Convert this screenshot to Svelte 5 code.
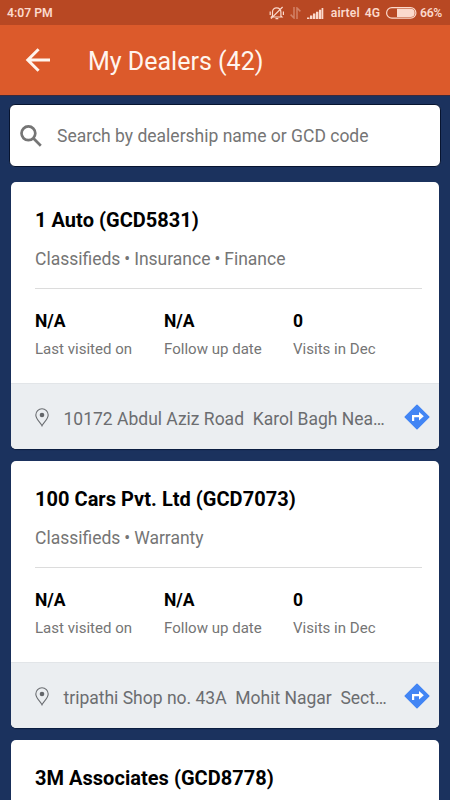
<script lang="ts">
	interface Dealer {
		name: string;
		code: string;
		details?: {
			services: string[];
			lastVisited: string;
			followUp: string;
			visits: number;
			address: string;
		};
	}

	const total = 42;
	let search = $state('');

	const dealers: Dealer[] = [
		{
			name: '1 Auto',
			code: 'GCD5831',
			details: {
				services: ['Classifieds', 'Insurance', 'Finance'],
				lastVisited: 'N/A',
				followUp: 'N/A',
				visits: 0,
				address: '10172 Abdul Aziz Road  Karol Bagh Nea…'
			}
		},
		{
			name: '100 Cars Pvt. Ltd',
			code: 'GCD7073',
			details: {
				services: ['Classifieds', 'Warranty'],
				lastVisited: 'N/A',
				followUp: 'N/A',
				visits: 0,
				address: 'tripathi Shop no. 43A  Mohit Nagar  Sect…'
			}
		},
		{
			name: '3M Associates',
			code: 'GCD8778'
		}
	];
</script>

<div class="screen">
	<div class="status">
		<span class="time">4:07 PM</span>
		<svg class="bell" width="16" height="14" viewBox="0 0 16 14">
			<path d="M3.5 10V6a4.2 4.2 0 0 1 8.4 0v4l1 1H2.5zM6.5 12.6h2.8M1.2 5.5v3.5M14.4 5.5v3.5M2 12.6L13.6 1" />
		</svg>
		<svg class="data" width="11" height="12" viewBox="0 0 11 12">
			<path d="M4 0v11L.6 7.6M7 12V1l3.4 3.4" />
		</svg>
		<svg class="signal" width="17" height="11" viewBox="0 0 17 11">
			<path d="M0 9.4h2.4V11H0zM3 7.5h2.4V11H3zM6 5.6h2.4V11H6zM9 3.7h2.4V11H9zM12 1.8h2.2V11H12zM14.6 0h1.7v11h-1.7z" />
		</svg>
		<span class="carrier">airtel</span>
		<span class="network">4G</span>
		<svg class="battery" width="31" height="12" viewBox="0 0 31 12">
			<rect x=".6" y=".6" width="29.3" height="10.6" rx="5.3" />
			<path d="M11 1.8h13.6a4.1 4.1 0 0 1 0 8.2H11z" />
		</svg>
		<span class="percent">66%</span>
	</div>

	<header>
		<button class="back" aria-label="Back">
			<svg width="25" height="24" viewBox="0 0 25 24">
				<path d="M13.6 1.2L2.8 12l10.8 10.8M2.8 12H25" />
			</svg>
		</button>
		<h1>My Dealers ({total})</h1>
	</header>

	<main>
		<label class="search">
			<svg width="22" height="22" viewBox="0 0 22 22">
				<circle cx="8.4" cy="8.3" r="6.9" />
				<path d="M13.6 13.5l7.2 7.2" />
			</svg>
			<input bind:value={search} placeholder="Search by dealership name or GCD code" />
		</label>

		{#each dealers as { name, code, details }}
			<article class="card">
				<div class="body">
					<h2>{name} ({code})</h2>
					{#if details}
						<p class="services">{details.services.join(' • ')}</p>
						<div class="stats">
							<div>
								<strong>{details.lastVisited}</strong>
								<span>Last visited on</span>
							</div>
							<div>
								<strong>{details.followUp}</strong>
								<span>Follow up date</span>
							</div>
							<div>
								<strong>{details.visits}</strong>
								<span>Visits in Dec</span>
							</div>
						</div>
					{/if}
				</div>
				{#if details}
					<div class="location">
						<svg class="pin" width="14" height="19" viewBox="0 0 14 19">
							<path d="M7 17.8C5.6 14.6.8 11.2.8 6.9a6.2 6.2 0 0 1 12.4 0c0 4.3-4.8 7.7-6.2 10.9z" />
							<circle cx="7" cy="7" r="2.3" />
						</svg>
						<span class="address">{details.address}</span>
						<svg class="directions" width="26" height="26" viewBox="0 0 26 26">
							<path class="sign" d="M13 1.2L24.8 13 13 24.8 1.2 13z" />
							<path class="stem" d="M9.1 17v-4.8h6.4" />
							<path class="head" d="M15 8l4.8 4.2-4.8 4.2z" />
						</svg>
					</div>
				{/if}
			</article>
		{/each}
	</main>
</div>

<style>
	:global(body) {
		margin: 0;
		background-color: #1b325e;
	}
	.screen {
		width: 450px;
		height: 800px;
		overflow: hidden;
		background-color: #1b325e;
		font-family: Roboto, sans-serif;
		color: #757575;
	}
	svg {
		display: block;
		flex: none;
	}
	.status {
		box-sizing: border-box;
		height: 25px;
		padding: 1px 8px 0 7px;
		display: flex;
		align-items: center;
		background-color: #b84823;
		color: #fbd9cc;
		font-size: 12.2px;
		font-weight: 600;
		white-space: nowrap;
	}
	.status path,
	.status rect {
		fill: none;
		stroke: #fbd9cc;
		stroke-width: 1.2;
	}
	.time {
		flex: 1;
	}
	.data {
		margin-left: 5px;
		opacity: 0.4;
	}
	.status .data path {
		stroke-width: 1.5;
	}
	.signal {
		margin-left: 6px;
	}
	.status .signal path,
	.status .battery path {
		fill: #fbd9cc;
		stroke: none;
	}
	.carrier {
		margin-left: 7px;
		letter-spacing: 0.1px;
	}
	.network {
		margin-left: 5px;
	}
	.battery {
		margin-left: 6px;
	}
	.percent {
		margin-left: 3px;
		letter-spacing: -0.3px;
	}
	header {
		box-sizing: border-box;
		height: 71px;
		padding-left: 25px;
		display: flex;
		align-items: center;
		border-bottom: 1px solid #3a2a3c;
		background-color: #dc5a2b;
		color: #fff5ee;
	}
	.back {
		border: 0;
		padding: 0;
		background: none;
	}
	.back path {
		fill: none;
		stroke: #fff5ee;
		stroke-width: 3;
	}
	h1 {
		margin: 4px 0 0 38px;
		font-size: 25px;
		font-weight: 400;
		line-height: 30px;
	}
	main {
		padding: 8px 9px 0;
	}
	.search {
		box-sizing: border-box;
		height: 63px;
		margin-bottom: 15px;
		padding-left: 10px;
		display: flex;
		align-items: center;
		gap: 15px;
		border: 1px solid #07142f;
		border-radius: 6px;
		background-color: #fff;
	}
	.search svg {
		fill: none;
		stroke: #757575;
		stroke-width: 2.7;
	}
	.search input {
		flex: 1;
		padding: 0;
		border: 0;
		outline: 0;
		background: none;
		font: inherit;
		font-size: 17.5px;
	}
	.search input::placeholder {
		color: #757575;
		opacity: 1;
	}
	.card {
		height: 267px;
		margin: 0 2px 12px;
		display: flex;
		flex-direction: column;
		border-radius: 5px;
		background-color: #fff;
		overflow: hidden;
		box-shadow: 0 1px 1px #0b1c3f;
	}
	.body {
		flex: 1;
		padding: 26px 17px 0 24px;
	}
	h2 {
		margin: 0;
		font-size: 20px;
		font-weight: 700;
		line-height: 24px;
		letter-spacing: 0.03px;
		color: #000;
	}
	.services {
		margin: 16px 0 0;
		padding-bottom: 17px;
		border-bottom: 1px solid #dcdcdc;
		font-size: 17.5px;
		line-height: 23px;
		word-spacing: -0.4px;
	}
	.stats {
		padding-top: 21px;
		display: grid;
		grid-template-columns: 129px 129px 1fr;
	}
	.stats strong,
	.stats span {
		display: block;
	}
	.stats strong {
		font-size: 17.5px;
		line-height: 22px;
		color: #000;
	}
	.stats span {
		margin-top: 8px;
		font-size: 15.05px;
		line-height: 18px;
	}
	.location {
		box-sizing: border-box;
		height: 66px;
		padding: 0 9px 0 24px;
		display: flex;
		align-items: center;
		border-top: 1px solid #e2e5e8;
		background-color: #ebeef1;
	}
	.pin {
		margin: 1px 0 0 -0.5px;
	}
	.pin path {
		fill: none;
		stroke: #6b6e72;
		stroke-width: 1.1;
	}
	.pin circle {
		fill: #63666a;
	}
	.address {
		flex: 1;
		margin: 4px 0 0 15px;
		font-size: 17.5px;
		white-space: pre;
		color: #6b6d70;
	}
	.sign {
		fill: #4285f4;
		stroke: #4285f4;
		stroke-width: 1.5;
		stroke-linejoin: round;
	}
	.stem {
		fill: none;
		stroke: #fff;
		stroke-width: 2.2;
	}
	.head {
		fill: #fff;
	}
</style>
